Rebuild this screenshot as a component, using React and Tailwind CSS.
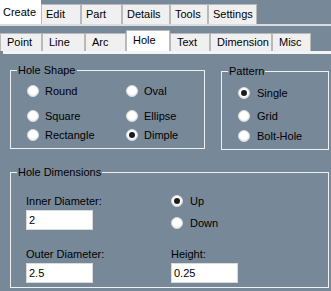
import React from "react";

const topTabs = [
  { label: "Create", w: 41, active: true },
  { label: "Edit", w: 40 },
  { label: "Part", w: 41 },
  { label: "Details", w: 48 },
  { label: "Tools", w: 38 },
  { label: "Settings", w: 49 },
];

const subTabs = [
  { label: "Point", w: 42 },
  { label: "Line", w: 43 },
  { label: "Arc", w: 41 },
  { label: "Hole", w: 44, active: true },
  { label: "Text", w: 40 },
  { label: "Dimension", w: 62 },
  { label: "Misc", w: 39 },
];

function Radio({ label, checked, gap = "ml-[6px]" }) {
  return (
    <div className="flex items-center h-[16px]">
      <span className="w-[12px] h-[12px] rounded-full bg-white border border-[#d4d8dc] shadow-[inset_0_-1px_1px_rgba(0,0,0,0.08)] flex items-center justify-center shrink-0">
        {checked && <span className="w-[6px] h-[6px] rounded-full bg-[#1c1c1c]" />}
      </span>
      <span className={gap}>{label}</span>
    </div>
  );
}

function Input({ value }) {
  return (
    <div className="w-[67px] h-[20px] bg-white border border-[#dadada] flex items-center pl-[2px]">
      {value}
    </div>
  );
}

export default function App() {
  return (
    <div className="w-[331px] h-[291px] bg-[#778899] overflow-hidden flex flex-col text-black font-['Liberation_Sans',Arial,sans-serif] text-[11px] leading-[13px]">
      {/* top tab row */}
      <div className="flex items-end h-[24px] shrink-0">
        {topTabs.map((t) =>
          t.active ? (
            <div key={t.label} className="h-[24px] bg-white flex items-center pl-[3px] shrink-0" style={{ width: t.w }}>
              {t.label}
            </div>
          ) : (
            <div
              key={t.label}
              className="h-[20px] bg-[#f0f0f0] border-t border-l border-r border-[#b9b9b9] flex items-center pl-[4px] shrink-0"
              style={{ width: t.w }}
            >
              {t.label}
            </div>
          )
        )}
      </div>
      <div className="h-[2px] bg-[#d9dde2] shrink-0" />
      {/* second tab row */}
      <div className="flex items-end h-[25px] mt-[0px] shrink-0">
        {subTabs.map((t) =>
          t.active ? (
            <div
              key={t.label}
              className="h-[21px] bg-white border-t border-l border-r border-[#b9b9b9] flex items-center pl-[6px] pb-[2px] shrink-0"
              style={{ width: t.w }}
            >
              {t.label}
            </div>
          ) : (
            <div
              key={t.label}
              className="h-[18px] bg-[#f0f0f0] border-t border-l border-r border-[#b9b9b9] flex items-center pl-[6px] shrink-0"
              style={{ width: t.w }}
            >
              {t.label}
            </div>
          )
        )}
      </div>
      <div className="h-[3px] ml-[3px] bg-[#f4f4f4] shrink-0" />

      {/* page content */}
      <div className="flex items-start pl-[10px] mt-[10px]">
        <fieldset className="w-[195px] h-[85px] border border-[#eef0f2] shrink-0">
          <legend className="ml-[6px] px-[1px]">Hole Shape</legend>
          <div className="flex pl-[16px]">
            <div className="w-[99px] flex flex-col">
              <div className="mt-[6px]"><Radio label="Round" /></div>
              <div className="mt-[9px]"><Radio label="Square" /></div>
              <div className="mt-[3px]"><Radio label="Rectangle" /></div>
            </div>
            <div className="flex flex-col">
              <div className="mt-[6px]"><Radio label="Oval" /></div>
              <div className="mt-[9px]"><Radio label="Ellipse" /></div>
              <div className="mt-[3px]"><Radio label="Dimple" checked /></div>
            </div>
          </div>
        </fieldset>
        <fieldset className="w-[108px] h-[85px] ml-[16px] mt-[1px] border border-[#eef0f2] shrink-0">
          <legend className="ml-[6px] px-[1px]">Pattern</legend>
          <div className="flex flex-col pl-[16px]">
            <div className="mt-[7px]"><Radio label="Single" checked gap="ml-[7px]" /></div>
            <div className="mt-[7px]"><Radio label="Grid" gap="ml-[7px]" /></div>
            <div className="mt-[4px]"><Radio label="Bolt-Hole" gap="ml-[7px]" /></div>
          </div>
        </fieldset>
      </div>

      <div className="pl-[10px] mt-[16px]">
        <fieldset className="w-[319px] h-[122px] border border-[#eef0f2]">
          <legend className="ml-[6px] px-[1px]">Hole Dimensions</legend>
          <div className="flex pl-[15px]">
            <div className="w-[145px] flex flex-col">
              <div className="mt-[16px]">Inner Diameter:</div>
              <div className="mt-[2px]"><Input value="2" /></div>
              <div className="mt-[18px]">Outer Diameter:</div>
              <div className="mt-[2px]"><Input value="2.5" /></div>
            </div>
            <div className="flex flex-col">
              <div className="mt-[14px]"><Radio label="Up" checked gap="ml-[7px]" /></div>
              <div className="mt-[6px]"><Radio label="Down" gap="ml-[7px]" /></div>
              <div className="mt-[17px]">Height:</div>
              <div className="mt-[2px]"><Input value="0.25" /></div>
            </div>
          </div>
        </fieldset>
      </div>
    </div>
  );
}
